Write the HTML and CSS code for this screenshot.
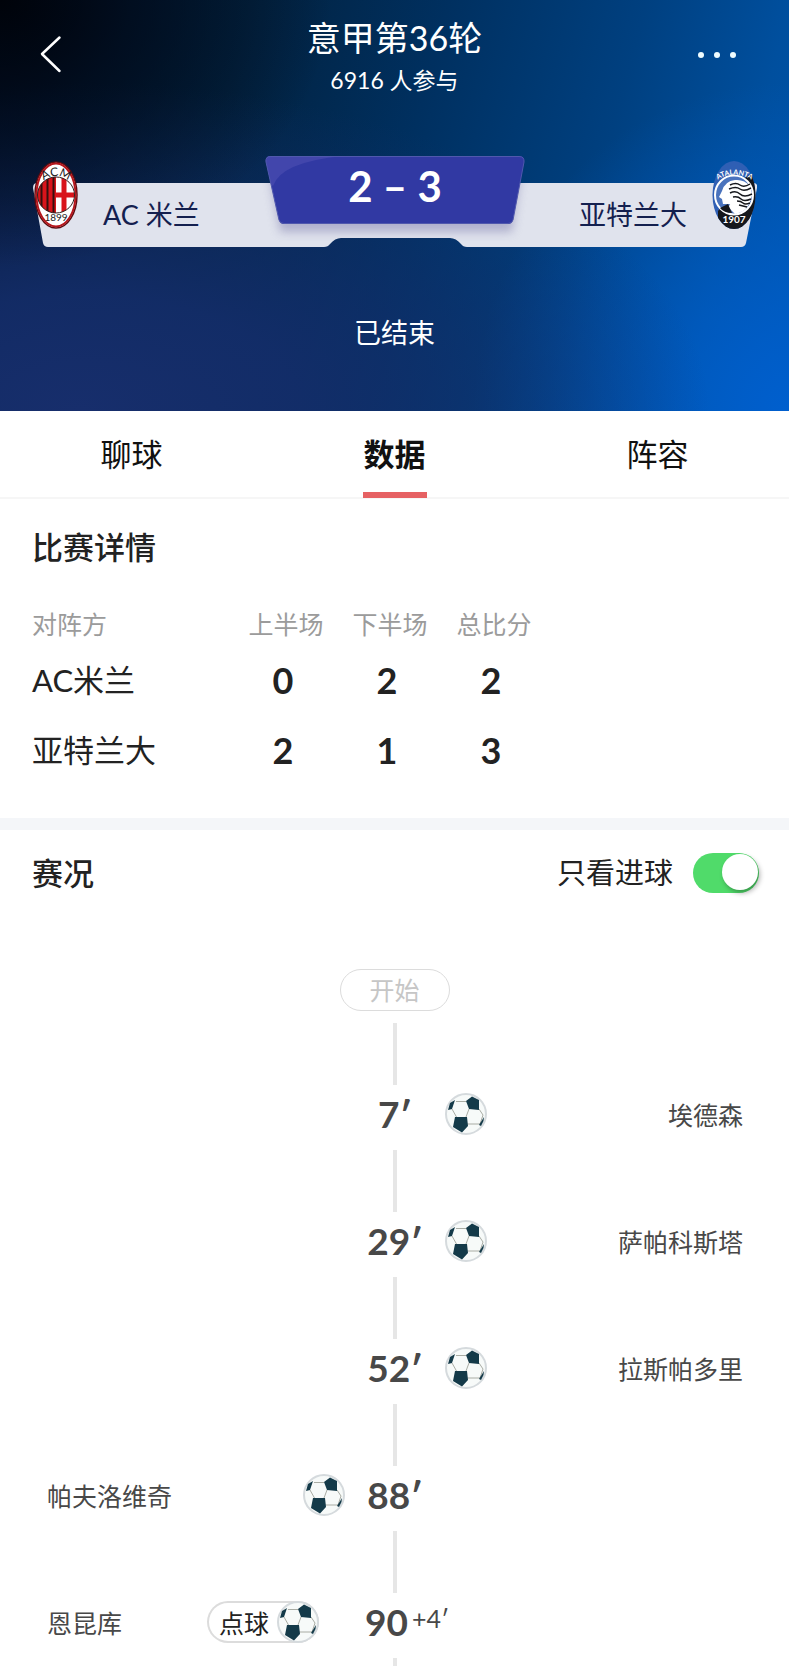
FILE: index.html
```html
<!DOCTYPE html>
<html lang="zh-CN">
<head>
<meta charset="utf-8">
<meta name="viewport" content="width=device-width, initial-scale=1">
<title>意甲第36轮</title>
<link rel="stylesheet" href="styles.css">
</head>
<body>
<svg class="defs" aria-hidden="true">
  <symbol id="ball" viewBox="0 0 42 42">
    <circle cx="21" cy="21" r="20" fill="#f7faf9" stroke="#d5dadd" stroke-width="2"/>
    <path d="M11 8.500H21M7 16l4.500 8M24 16l-3 8M34 16l4 6-3 9H22" fill="none" stroke="#a9aca4" stroke-width="1"/>
    <path d="M21 8l6-4.500 7 3.500v10l-10-1zM10 24h12l1 9-6 6.500-9-5.500zM3 17l2-7 5-3-3 9zM34 32l5-8-.5 4-2.500 5z" fill="#143a49"/>
  </symbol>
</svg>
<header class="hero">
  <div class="topbar">
    <button class="icon-button" type="button" aria-label="返回">
      <svg width="24" height="40" viewBox="0 0 24 40"><path d="M20.500 3.500L3 20l17.500 17" fill="none" stroke="#fff" stroke-width="2.500" stroke-linecap="round" stroke-linejoin="round"/></svg>
    </button>
    <div class="titles">
      <h1 class="title">意甲第36轮</h1>
      <p class="subtitle">6916 人参与</p>
    </div>
    <button class="icon-button icon-button--more" type="button" aria-label="更多">
      <svg width="40" height="40" viewBox="0 0 40 40" fill="#eefcff"><circle cx="4" cy="21" r="3"/><circle cx="20" cy="21" r="3"/><circle cx="36" cy="21" r="3"/></svg>
    </button>
  </div>
  <div class="scoreboard">
    <svg class="panel" viewBox="0 0 724 102" preserveAspectRatio="none" aria-hidden="true">
      <defs>
        <filter id="soft" x="-10%" y="-20%" width="120%" height="160%"><feGaussianBlur stdDeviation="5"/></filter>
        <clipPath id="band"><path d="M4 27H720Q725 27 724 32L713 87Q712 91 708 91H434Q430 91 428 88Q423 82 417 82H308Q302 82 297 88Q295 91 291 91H15Q11 91 10 87L0 32Q0 27 4 27Z"/></clipPath>
        <clipPath id="plate"><path d="M238 0H486Q492 0 491 6L480 64Q479 68 475 68H251Q247 68 246 64L233 6Q232 0 238 0Z"/></clipPath>
      </defs>
      <g clip-path="url(#band)">
        <rect width="724" height="102" fill="#e0e3ed"/>
        <path d="M234 5H490L479 76H247Z" fill="#8f8fb8" opacity=".6" filter="url(#soft)"/>
      </g>
      <g clip-path="url(#plate)">
        <rect x="230" width="264" height="70" fill="#3139a3"/>
        <path d="M230 0H310Q248 6 240 30L230 20Z" fill="#4246ac"/>
      </g>
      <path d="M238 .5H486Q491.500 .5 491 6L480 64Q479 67.500 475 67.500H251Q247 67.500 246 64L233 6Q232 .5 238 .5Z" fill="none" stroke="#5058ad" stroke-width="1"/>
    </svg>
    <div class="team">
      <svg class="crest" width="44" height="68" viewBox="0 0 44 68" role="img" aria-label="AC Milan">
        <defs>
          <clipPath id="milan"><ellipse cx="22" cy="34" rx="18.500" ry="18"/></clipPath>
          <path id="milan-arc" d="M9 20Q22 10 35 20"/>
        </defs>
        <ellipse cx="22" cy="34" rx="21" ry="33" fill="#fff" stroke="#5c0b10" stroke-width="1.500"/>
        <ellipse cx="22" cy="34" rx="19.500" ry="31.500" fill="#fff" stroke="#b5161c" stroke-width="2"/>
        <g clip-path="url(#milan)">
          <rect x="3" y="15" width="19" height="38" fill="#d8141b"/>
          <path d="M7.500 15v38M13.500 15v38M19.500 15v38" stroke="#35100f" stroke-width="2"/>
          <rect x="22" y="15" width="19" height="38" fill="#fff"/>
          <path d="M30 15v38M22 34h19" stroke="#d8141b" stroke-width="5"/>
        </g>
        <ellipse cx="22" cy="34" rx="18.500" ry="18" fill="none" stroke="#33201f" stroke-width="1"/>
        <text class="crest-text crest-text--lg"><textPath href="#milan-arc" startOffset="50%">ACM</textPath></text>
        <text x="22" y="60" class="crest-text crest-text--sm">1899</text>
      </svg>
      <span class="team-name">AC 米兰</span>
    </div>
    <strong class="score">2 – 3</strong>
    <div class="team team--away">
      <span class="team-name">亚特兰大</span>
      <svg class="crest" width="44" height="68" viewBox="0 0 44 68" role="img" aria-label="Atalanta">
        <defs>
          <clipPath id="atalanta"><ellipse cx="22" cy="34" rx="21.500" ry="34"/></clipPath>
          <path id="arc" d="M5 19Q22 8 40 19"/>
        </defs>
        <g clip-path="url(#atalanta)">
          <rect width="44" height="68" fill="#2f5fb4"/>
          <path d="M44 10L34 16 6 50V68H44Z" fill="#15171c"/>
        </g>
        <ellipse cx="22" cy="34" rx="19" ry="19.500" fill="#4a73bd" stroke="#fff" stroke-width="2"/>
        <path d="M37 22Q43 36 34 47 29 52 23 53L16 46Z" fill="#fff"/>
        <path d="M10 30Q13 20 23 19 32 18 38 25L40 34Q38 45 30 51L22 46 17 43H11L10 38 7 36Z" fill="#fff"/>
        <path d="M8 47L16 43 20 52Q12 52 8 47Z" fill="#15171c"/>
        <path d="M18 24q6-3 10 0t10-1M17 28q7-3 11 0t11-1M18 32q6-3 10 1t12 0M21 36q5-1 8 2t10 0M25 40q4 0 6 2t7 0M27 44q4 1 8 2" fill="none" stroke="#15171c" stroke-width="1.500"/>
        <text class="crest-text crest-text--arc"><textPath href="#arc" startOffset="50%">ATALANTA</textPath></text>
        <text x="22" y="62" class="crest-text crest-text--light">1907</text>
      </svg>
    </div>
  </div>
  <p class="status">已结束</p>
</header>

<nav class="tabs">
  <a class="tab" href="#chat">聊球</a>
  <a class="tab tab--active" href="#data" aria-current="page">数据</a>
  <a class="tab" href="#lineup">阵容</a>
</nav>

<main>
  <section class="details">
    <h2 class="heading">比赛详情</h2>
    <table class="stats">
      <thead><tr><th class="side" scope="col">对阵方</th><th scope="col">上半场</th><th scope="col">下半场</th><th scope="col">总比分</th></tr></thead>
      <tbody>
        <tr><th class="side" scope="row">AC米兰</th><td>0</td><td>2</td><td>2</td></tr>
        <tr><th class="side" scope="row">亚特兰大</th><td>2</td><td>1</td><td>3</td></tr>
      </tbody>
    </table>
  </section>

  <section class="events">
    <div class="events-head">
      <h2 class="heading">赛况</h2>
      <label class="filter" for="goals">只看进球 <input class="switch" id="goals" type="checkbox" role="switch" checked></label>
    </div>
    <div class="start">开始</div>
    <ol class="timeline">
      <li class="event">
        <time class="time">7′</time>
        <div class="right"><svg class="ball"><use href="#ball"/></svg><span>埃德森</span></div>
      </li>
      <li class="event">
        <time class="time">29′</time>
        <div class="right"><svg class="ball"><use href="#ball"/></svg><span>萨帕科斯塔</span></div>
      </li>
      <li class="event">
        <time class="time">52′</time>
        <div class="right"><svg class="ball"><use href="#ball"/></svg><span>拉斯帕多里</span></div>
      </li>
      <li class="event">
        <div class="left"><span>帕夫洛维奇</span><svg class="ball"><use href="#ball"/></svg></div>
        <time class="time">88′</time>
      </li>
      <li class="event event--added">
        <div class="left"><span>恩昆库</span><span class="penalty">点球<svg class="ball"><use href="#ball"/></svg></span></div>
        <time class="time">90<span class="added">+4′</span></time>
      </li>
    </ol>
  </section>
</main>
</body>
</html>
```

FILE: styles.css
```css
* { box-sizing: border-box; }

body {
  margin: 0;
  background: #fff;
  color: #222;
  font-family: Lato, "Noto Sans CJK SC", sans-serif;
}

h1, h2, p, ol { margin: 0; padding: 0; }

.defs { display: none; }

/* Header */
.hero {
  height: 411px;
  padding-top: 16px;
  color: #fff;
  background:
    radial-gradient(ellipse 42% 65% at 0% 0%, #00030a 0%, rgba(0, 6, 18, 0.6) 40%, rgba(0, 6, 18, 0) 100%),
    radial-gradient(ellipse 80% 80% at 10% 100%, #172e6c 0%, rgba(20, 45, 106, 0.9) 35%, rgba(16, 44, 104, 0) 100%),
    radial-gradient(ellipse 40% 80% at 100% 100%, #005fce 0%, rgba(0, 86, 185, 0) 100%),
    linear-gradient(105deg, #021128 0%, #022240 28%, #003060 50%, #004080 72%, #004f9e 88%, #0055ad 100%);
}

.topbar {
  display: flex;
  justify-content: space-between;
  height: 80px;
  padding: 0 36px;
}

.icon-button {
  display: flex;
  align-items: center;
  width: 56px;
  height: 76px;
  padding: 0;
  border: 0;
  background: none;
}

.icon-button:first-child { padding-left: 3px; }
.icon-button--more { justify-content: flex-end; padding-right: 16px; }

.titles { text-align: center; }
.title { font-size: 34px; line-height: 44px; font-weight: 400; }
.subtitle { font-size: 23px; line-height: 40px; }

.scoreboard {
  position: relative;
  display: grid;
  grid-template-columns: 1fr 258px 1fr;
  height: 91px;
  margin: 60px 32px 0 33px;
}

.panel {
  position: absolute;
  inset: 0;
  width: 100%;
  height: 102px;
}

.team, .score { position: relative; }

.team {
  display: flex;
  gap: 25px;
  align-items: flex-start;
  padding: 5px 1px 0;
  color: #14204f;
}

.team--away { justify-content: flex-end; }
.team-name { padding-top: 34px; font-size: 27px; line-height: 40px; }
.score { font-size: 42px; line-height: 60px; font-weight: 700; text-align: center; }

.crest-text { font-family: Lato, sans-serif; text-anchor: middle; fill: #1c1c1c; }
.crest-text--lg { font-size: 12px; }
.crest-text--sm { font-size: 10px; }
.crest-text--arc { font-size: 7px; font-weight: 700; fill: #fff; }
.crest-text--light { font-size: 10px; font-weight: 700; fill: #fff; }

.status { padding-top: 66px; font-size: 27px; line-height: 40px; text-align: center; }

/* Tabs */
.tabs {
  display: grid;
  grid-template-columns: repeat(3, 1fr);
  height: 88px;
  border-bottom: 2px solid #f6f6f6;
}

.tab {
  display: flex;
  justify-content: center;
  padding-top: 21px;
  color: #111;
  font-size: 31px;
  line-height: 44px;
  text-decoration: none;
}

.tab--active { position: relative; font-weight: 700; }

.tab--active::after {
  content: "";
  position: absolute;
  bottom: -1px;
  width: 64px;
  height: 6px;
  background: #e66163;
}

/* Match details */
.details {
  padding: 26px 32px 33px;
  border-bottom: 12px solid #f4f6f9;
}

.heading { font-size: 31px; line-height: 44px; font-weight: 500; }

.stats { margin-top: 34px; border-collapse: collapse; table-layout: fixed; width: 514px; }
.stats th, .stats td { width: 104px; padding: 0; text-align: center; }
.stats .side { width: 202px; text-align: left; }
.stats thead th { height: 42px; color: #9b9b9b; font-size: 25px; line-height: 40px; font-weight: 400; }
.stats tbody th, .stats tbody td { height: 70px; font-size: 31px; line-height: 44px; font-weight: 400; }
.stats tbody td { padding-right: 6px; font-size: 36px; font-weight: 700; }

/* Events */
.events-head {
  display: flex;
  justify-content: space-between;
  align-items: center;
  padding: 21px 30px 0 32px;
}

.filter { display: flex; align-items: center; gap: 20px; font-size: 29px; line-height: 44px; }

.switch {
  appearance: none;
  width: 66px;
  height: 40px;
  margin: 0;
  padding: 1px;
  border-radius: 20px;
  background: #ccc;
}

.switch::before {
  content: "";
  display: block;
  width: 36px;
  height: 36px;
  border-radius: 50%;
  background: #fff;
  box-shadow: 2px 3px 5px rgba(0, 0, 0, 0.3);
}

.switch:checked { background: #50db6a; }
.switch:checked::before { margin-left: 28px; }

.start {
  width: 110px;
  margin: 74px auto 12px;
  border: 1px solid #dcdcdc;
  border-radius: 21px;
  color: #c6c6c6;
  font-size: 25px;
  line-height: 40px;
  text-align: center;
}

.timeline { list-style: none; padding: 0 46px 0 47px; }

.event {
  display: grid;
  grid-template-columns: 1fr 60px 1fr;
  column-gap: 20px;
  align-items: center;
  grid-template-rows: 62px 58px;
  padding-bottom: 7px;
  color: #484848;
  font-size: 25px;
}

.event::before {
  content: "";
  grid-column: 2;
  justify-self: center;
  width: 4px;
  height: 62px;
  background: #e6e6e6;
}

.timeline::after {
  content: "";
  display: block;
  width: 4px;
  height: 8px;
  margin: 0 auto;
  background: #e6e6e6;
}

.time {
  grid-area: 2 / 2;
  justify-self: center;
  font-size: 37px;
  line-height: 44px;
  font-weight: 700;
  white-space: nowrap;
}

.event--added .time { display: flex; justify-self: start; }
.added { padding-left: 4px; font-size: 25px; line-height: 36px; font-weight: 400; }

.left, .right { display: flex; justify-content: space-between; align-items: center; }
.left { grid-area: 2 / 1; }
.right { grid-area: 2 / 3; }

.ball { display: block; width: 42px; height: 42px; }

.penalty {
  display: flex;
  align-items: center;
  gap: 8px;
  margin-right: 26px;
  padding-left: 12px;
  border-radius: 21px;
  box-shadow: inset 0 0 0 2px #dcdcdc;
  color: #222;
}
```
